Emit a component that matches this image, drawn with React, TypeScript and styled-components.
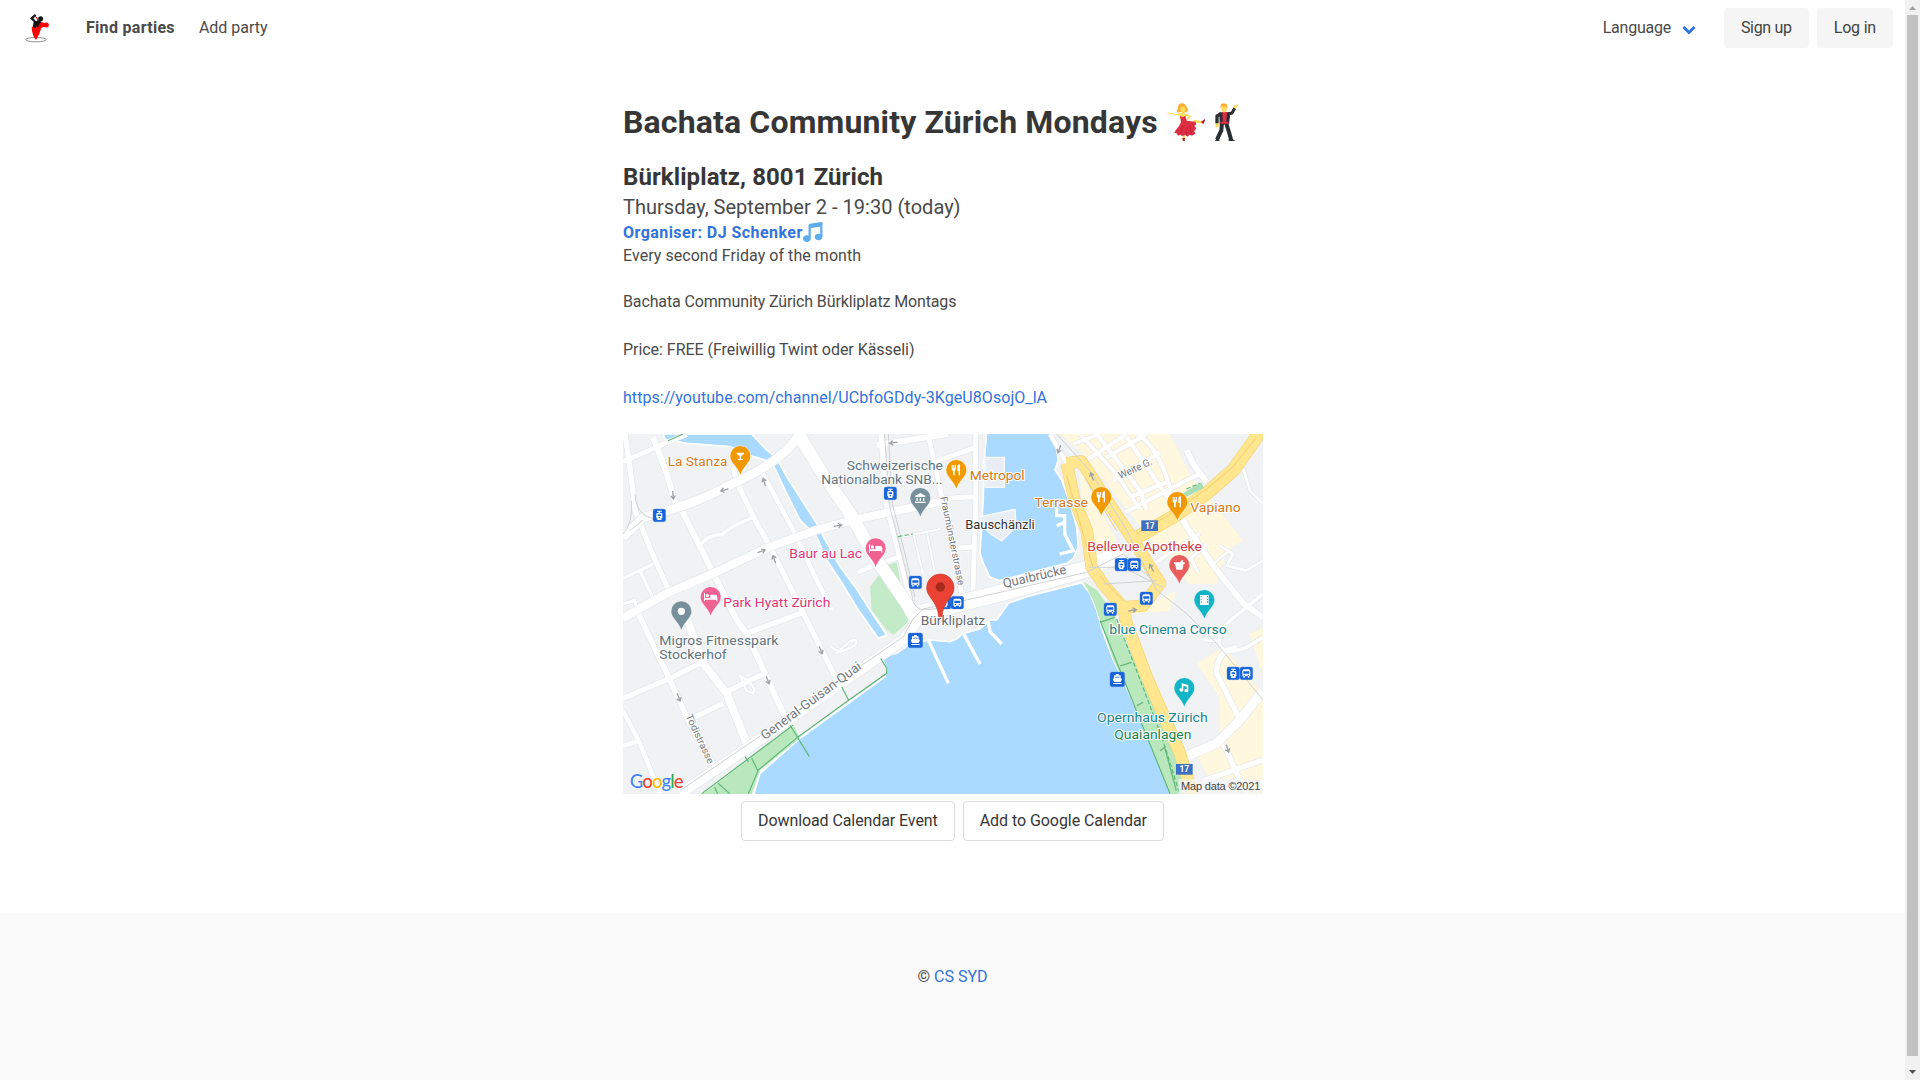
import React from "react";
import styled, { createGlobalStyle } from "styled-components";

const GlobalStyle = createGlobalStyle`
  *, *::before, *::after { box-sizing: border-box; }
  html, body { margin: 0; padding: 0; background: #fff; overflow: hidden; }
  body {
    font-family: Roboto, "Liberation Sans", sans-serif;
    font-size: 16px;
    line-height: 24px;
    color: #4a4a4a;
    text-rendering: optimizeLegibility;
  }
`;

const Screen = styled.div`
  display: grid;
  grid-template-columns: minmax(0, 1fr) 15px;
  height: 1080px;
`;

const Page = styled.div`
  display: flex;
  flex-direction: column;
  min-width: 0;
`;

const Navbar = styled.nav`
  display: flex;
  justify-content: space-between;
  align-items: center;
  height: 56px;
  padding: 0 12px 0 24px;
`;

const NavGroup = styled.div<{ $gap: number }>`
  display: flex;
  align-items: center;
  gap: ${(p) => p.$gap}px;
`;

const LogoLink = styled.a`
  display: flex;
  width: 38px;
`;

const NavLink = styled.a<{ $active?: boolean; $tracking?: number }>`
  color: #4a4a4a;
  font-weight: ${(p) => (p.$active ? 700 : 400)};
  letter-spacing: ${(p) => p.$tracking ?? 0}px;
`;

const LanguageMenu = styled.div`
  display: flex;
  align-items: center;
  gap: 11px;
  margin-right: 20px;
  svg { display: block; margin-top: 3px; }
`;

const Button = styled.a<{ $outlined?: boolean; $tracking: number }>`
  display: inline-flex;
  align-items: center;
  justify-content: center;
  height: 40px;
  padding: 0 16px;
  border: 1px solid ${(p) => (p.$outlined ? "#dbdbdb" : "transparent")};
  border-radius: 4px;
  background: ${(p) => (p.$outlined ? "#fff" : "#f5f5f5")};
  color: ${(p) => (p.$outlined ? "#363636" : "#424242")};
  letter-spacing: ${(p) => p.$tracking}px;
  white-space: nowrap;
`;

const Content = styled.main`
  width: 660px;
  height: 857px;
  margin: 0 auto;
  padding-top: 48px;
`;

const Article = styled.article`
  padding-left: 0.5px;
`;

const Title = styled.h1`
  display: flex;
  align-items: center;
  margin: 0 0 24px;
  height: 36px;
  font-size: 32px;
  line-height: 36px;
  font-weight: 700;
  letter-spacing: 0.15px;
  color: #363636;
  white-space: nowrap;
  svg { flex: none; }
`;

const TitleText = styled.span`
  margin-right: 9px;
`;

const Place = styled.h2`
  margin: 0 0 2px;
  font-size: 24px;
  line-height: 27px;
  font-weight: 700;
  letter-spacing: 0.09px;
  color: #363636;
`;

const When = styled.p`
  margin: 0 0 -1px;
  font-size: 20px;
  line-height: 29px;
  letter-spacing: 0.02px;
`;

const Organiser = styled.p`
  display: flex;
  align-items: center;
  margin: 0;
  height: 23px;
  font-weight: 700;
  letter-spacing: 0.45px;
  svg { margin-bottom: 2px; }
`;

const Link = styled.a`
  color: #3273dc;
  text-decoration: none;
`;

const Details = styled.div`
  display: flex;
  flex-direction: column;
  gap: 24px;
  margin-bottom: 24px;
`;

const Paragraph = styled.p<{ $tight?: boolean; $tracking: number }>`
  margin: 0 0 ${(p) => (p.$tight ? -2 : 0)}px;
  letter-spacing: ${(p) => p.$tracking}px;
`;

const MapFrame = styled.div`
  width: 640px;
  height: 360px;
  overflow: hidden;
  svg { display: block; }
`;

const Actions = styled.div`
  display: flex;
  justify-content: center;
  gap: 8px;
  margin-top: 7px;
`;

const Footer = styled.footer`
  flex: 1;
  padding-top: 52px;
  background: #fafafa;
  text-align: center;
`;

const ScrollTrack = styled.div`
  display: flex;
  flex-direction: column;
  align-items: center;
  background: #f1f1f1;
  svg { display: block; flex: none; }
  svg:last-child { margin-top: auto; }
`;

const ScrollThumb = styled.div`
  width: 11px;
  height: 1041px;
  background: #c1c1c1;
`;

const Logo = () => (
  <svg width="28" height="31" viewBox="72 38 84 93" aria-label="Social Dance Today">
    <ellipse cx="108" cy="118" rx="31" ry="6.500" fill="none" stroke="#444" strokeWidth="1.800" />
    <path d="M95 82L100 76L114 64L107 50L110 49L118 65L127 66L137 70V78L124 82Q120 100 108 119Q96 104 95 82Z" fill="#f00" />
    <circle cx="139" cy="74" r="7.500" fill="#f00" />
    <circle cx="122" cy="55" r="7.500" fill="#111" />
    <path d="M90 54L104 42L109 44L108 48L100 54L107 62L117 60L125 64L118 70L115 80L110 78L108 82L101 82L99 76L101 64Z" fill="#111" />
  </svg>
);

const DancerWoman = () => (
  <svg width="38" height="38" viewBox="51 38 114 114" role="img" aria-label="Woman dancing">
    <path d="M52 66L82 72Q94 65 107 70L124 77L113 90L109 87L116 79L106 77L104 85H90L87 76L52 69Z" fill="#ffdc5d" />
    <path d="M97 130L98 150H105L104 130ZM132 88L160 93V99L132 97Z" fill="#ffdc5d" />
    <path d="M84 55Q83 40 95 39Q108 40 110 51Q116 55 112 63Q107 69 101 65H91Q84 69 80 64Q80 59 84 55Z" fill="#ffac33" />
    <path d="M91 51Q99 45 106 52Q107 66 98 69Q90 67 91 51Z" fill="#ffdc5d" />
    <path d="M90 76Q97 84 106 76L110 91L136 94L139 102L133 107L139 114L133 122L136 130L126 136L119 133L112 139L106 134L96 137L91 133L84 136L80 129L73 128L77 120Q89 107 93 96Z" fill="#dd2e44" />
    <path d="M97 143H105L104 153H99ZM154 94L164 86L165 90L161 100L154 98Z" fill="#be1931" />
    <path d="M91 129L98 107M109 132L112 110M124 129L119 106" stroke="#be1931" strokeWidth="2" />
  </svg>
);

const DancerMan = () => (
  <svg width="38" height="38" viewBox="165 38 114 114" role="img" aria-label="Man dancing">
    <path d="M250 54L251 43L255 46L261 41L263 46L257 55ZM196 98H205L207 107L201 112L196 107Z" fill="#ffdc5d" />
    <g fill="none" stroke="#292f33" strokeLinejoin="round">
      <path d="M212 71L201 77L201 99" strokeWidth="10" />
      <path d="M234 71L246 68L254 54" strokeWidth="9" />
      <path d="M216 97L214 120L201 148" strokeWidth="12" />
      <path d="M228 97L236 122L243 147" strokeWidth="12" />
    </g>
    <path d="M208 66H238L240 78L237 102H209ZM194 152L202 144L210 152ZM236 152V146L247 145L256 152Z" fill="#292f33" />
    <path d="M217 65H231L229 94H236V100H211V94H218Z" fill="#dd2e44" />
    <path d="M214 46H230V60Q222 73 215 60Z" fill="#ffdc5d" />
    <path d="M212 56Q209 40 221 39Q236 39 231 57L228 49Q220 49 215 47Z" fill="#ffac33" />
  </svg>
);

const MusicNote = () => (
  <svg width="20" height="20" viewBox="0 0 36 36" role="img" aria-label="Music">
    <path fill="#5dadec" d="M34.2.1C33.9 0 33.6 0 33.3 0L12.3 3C11 3.2 10 4.400 10 5.700V24.600C9.100 24.200 8.100 24 7 24C3.100 24 0 26.700 0 30S3.100 36 7 36S14 33.300 14 30V10.900L31 8.500V21.600C30.100 21.200 29.100 21 28 21C24.100 21 21 23.700 21 27S24.100 33 28 33S35 30.300 35 27V1.500C35 .8 34.700.3 34.200.1Z" />
  </svg>
);

type Road = [string, number];

/* Map artwork uses a 1920x1080 grid, three units for each pixel. */
const minorRoads: Road[] = [
  ["M0 83L191 0", 15],
  ["M6 0L25 130L36 228L80 340L141 478", 16],
  ["M90 10L101 38L131 118L156 203L181 238L231 338L291 458L341 558L371 598L421 708L481 838L511 878", 18],
  ["M331 100L341 143L391 248L441 338L501 458L536 528L591 638L631 718L665 760", 16],
  ["M411 103L521 308L571 418L626 528", 14],
  ["M231 333Q260 300 296 303Q320 278 391 250", 11],
  ["M0 433L91 390M51 410L91 495M0 510L35 500L45 530", 10],
  ["M41 528L141 738L201 870L275 1000", 17],
  ["M180 530L201 578L241 688L311 778L371 928", 24],
  ["M0 793L141 733L241 683M371 598L541 535M311 773L425 718M206 853L301 808", 16],
  ["M0 830L51 928L111 1079M0 935L48 920", 14],
  ["M761 33L975 0M775 0L790 208L831 368L871 528", 18],
  ["M915 0L955 180L1000 400L1020 500", 14],
  ["M1058 0V200L1050 470M971 193L1051 188M1001 343L1050 338M831 120L1058 40", 15],
  ["M705 415L761 390L831 368", 14],
  ["M831 310L951 285M871 300L900 420M911 292L935 410", 6],
  ["M625 638L650 655L695 635Q710 610 680 622L640 658M351 725L375 740L395 765L390 778L370 770Z", 7],
  ["M1281 0L1331 88M1351 30L1431 0M1391 78L1511 0M1371 0L1480 120L1550 225", 12],
  ["M1421 0L1551 170L1570 225M1511 10L1641 200M1541 0Q1601 30 1641 160M1451 70L1571 0M1471 140L1611 55M1506 235L1731 118M1520 190L1641 140", 13],
  ["M1691 48L1711 90L1751 145M1631 165L1691 278L1781 408L1861 508L1920 550", 18],
  ["M1591 390L1731 298M1641 430L1751 330M1701 370L1725 415", 10],
  ["M1861 105L1881 170L1920 210M1791 335L1831 360L1811 395L1870 410L1920 380M1771 390L1820 348", 8],
  ["M1920 480L1821 560Q1780 600 1791 635Q1810 665 1870 640L1920 610M1741 618L1790 620", 11],
  ["M1841 640Q1780 650 1781 718L1851 858M1801 930L1871 1079M1741 1040L1920 978", 16],
  ["M1681 970L1781 928L1851 858L1920 770", 28],
];

const arterials: Road[] = [
  ["M531 0Q480 80 341 143Q241 198 141 228L61 250L0 310", 27],
  ["M0 552L131 478L271 418L441 338L511 313L581 288L691 258L831 228L955 203", 25],
  ["M526 0L591 108L681 238L761 378L851 508L880 560", 38],
  ["M171 1079L391 930L591 792L711 708L841 618L890 550L1000 510", 32],
  ["M880 540L960 520L1141 475L1391 405L1500 355", 50],
];

const highways: Road[] = [
  ["M1331 88L1355 200L1391 288L1406 400L1440 450L1500 520L1511 568L1571 728L1671 958L1711 1090", 34],
  ["M1331 88L1375 82L1471 228L1531 318L1611 448L1560 515L1500 520", 34],
  ["M1525 320L1651 248L1751 178L1831 108L1911 -5", 38],
];

const Roads = ({ roads, fill, edge }: { roads: Road[]; fill: string; edge: string }) => (
  <g fill="none" strokeLinejoin="round">
    {roads.map(([d, w]) => <path key={d} d={d} stroke={edge} strokeWidth={w + 3} />)}
    {roads.map(([d, w]) => <path key={d} d={d} stroke={fill} strokeWidth={w} />)}
  </g>
);

type Glyph = "cocktail" | "food" | "bed" | "bank" | "dot" | "film" | "music" | "mortar";

const glyphs: Record<Glyph, React.ReactNode> = {
  cocktail: <path d="M-11 -10H11V-7L2 1V9H8V12H-8V9H-2V1L-11 -7Z" />,
  food: <path d="M-14 -15H-11V-7H-9V-15H-6V-7H-4V-15H-1V-4Q-1 0 -5 2V16H-10V2Q-14 0 -14 -4ZM3 -13Q6 -17 11 -17V16H7V3H3Z" />,
  bed: <path d="M-20 -12H-17V3H-1V-7H14Q20 -7 20 0V13H17V8H-17V13H-20ZM-15 -4A5 5 0 1 1 -5 -4A5 5 0 1 1 -15 -4" />,
  bank: <path d="M0 -15L15 -7V-3H-15V-7ZM-12 0H-8V9H-12ZM-2 0H2V9H-2ZM8 0H12V9H8ZM-16 11H16V15H-16Z" />,
  dot: <circle r="11" />,
  film: <path fillRule="evenodd" d="M-13 -15H13V15H-13ZM-11 -12V-8H-8V-12ZM-11 -4V0H-8V-4ZM-11 4V8H-8V4ZM8 -12V-8H11V-12ZM8 -4V0H11V-4ZM8 4V8H11V4Z" />,
  music: <path d="M-7 -14L12 -9V8A6 5 0 1 1 7 3V-4L-3 -7V6A6 5 0 1 1 -8 1V-14Z" />,
  mortar: <path d="M-16 -8H2L8 -16L12 -13L9 -8H16V-3H13L9 14H-9L-13 -3H-16Z" />,
};

const Pin = ({ x, y, color, glyph }: { x: number; y: number; color: string; glyph: Glyph }) => (
  <g transform={`translate(${x} ${y})`}>
    <path d="M-31 0A31 31 0 1 1 31 0C31 20 10 29 0 57C-10 29 -31 20 -31 0Z" fill={color} stroke="#fff" strokeOpacity=".65" strokeWidth="2" />
    <g fill="#fff">{glyphs[glyph]}</g>
  </g>
);

const Stop = ({ x, y, kind }: { x: number; y: number; kind: "bus" | "tram" | "boat" }) => (
  <g transform={`translate(${x} ${y})`}>
    <rect x={kind === "boat" ? -22 : -19} y={kind === "boat" ? -22 : -19} width={kind === "boat" ? 44 : 38} height={kind === "boat" ? 44 : 38} rx="6" fill="#1765dc" stroke="#4b7bca" strokeWidth="1" />
    {kind === "bus" && <path fill="#fff" fillRule="evenodd" d="M-8 -12H8Q12 -10 12 -7V9H9V13H5V9H-5V13H-9V9H-12V-7Q-12 -10 -8 -12ZM-9 -6V1H9V-6ZM-8 4V7H-4V4ZM4 4V7H8V4Z" />}
    {kind === "tram" && <path fill="#fff" fillRule="evenodd" d="M-7 -14H7V-11H2V-7H6Q9 -7 9 -3V8L5 11L8 14H-8L-5 11L-9 8V-3Q-9 -7 -6 -7H-2V-11H-7ZM-5 -3V2H5V-3ZM-2 5V9H2V5Z" />}
    {kind === "boat" && <path fill="#fff" fillRule="evenodd" d="M-4 -16H4V-12H10V-3L14 -1L10 8H-10L-14 -1L-10 -3V-12H-4ZM-6 -8V-4L0 -6L6 -4V-8ZM-13 11H13V14H-13Z" />}
  </g>
);

const RouteShield = ({ x, y }: { x: number; y: number }) => (
  <g transform={`translate(${x} ${y})`}>
    <rect x="-25" y="-16" width="50" height="32" fill="#3d6fc4" />
    <text y="9" textAnchor="middle" fontSize="25" fontWeight="700" fill="#fff">17</text>
  </g>
);

interface LabelProps {
  x: number; y: number; w: number; color: string; size?: number; rotate?: number; children: string;
}

const Label = ({ x, y, w, color, size = 41, rotate = 0, children }: LabelProps) => (
  <text
    transform={`translate(${x} ${y}) rotate(${rotate})`}
    fontSize={size}
    textLength={w}
    lengthAdjust="spacingAndGlyphs"
    fill={color}
    stroke="#fff"
    strokeWidth="6"
    strokeLinejoin="round"
    paintOrder="stroke"
  >
    {children}
  </text>
);

const orange = "#f29900";
const pink = "#f06292";
const slate = "#78909c";
const teal = "#12b5c5";

const arrows: [number, number, number][] = [
  [150, 183, 85], [305, 168, 165], [424, 145, -105], [415, 352, -20], [644, 275, -10], [454, 376, -110],
  [812, 26, 172], [167, 790, 68], [434, 738, 68], [593, 648, 68], [1309, 45, 110], [1407, 128, -110],
  [1586, 402, -120], [1528, 529, -10], [1813, 943, 70],
];

const VenueMap = () => (
  <svg width="640" height="360" viewBox="0 0 1920 1080" fontFamily="Roboto, 'Liberation Sans', sans-serif">
    <rect width="1920" height="1080" fill="#f0f2f4" />
    <path d="M1310 0H1640L1700 120L1790 230L1860 320L1810 350L1780 450L1700 450L1570 300L1381 60Z" fill="#fff7de" />
    <path d="M1370 110L1481 318L1411 388L1385 280ZM1520 540L1660 470L1640 530Z" fill="#fff7de" />
    <path d="M1721 690L1801 638L1870 720L1920 780V1079H1880L1850 1030L1760 1040L1721 960L1790 910V790Z" fill="#fff7de" />
    <path d="M1880 600L1920 580V720Z" fill="#fff7de" />

    <g fill="#aadaff" stroke="#fff" strokeWidth="5">
      <path d="M121 0H386L426 43L461 73L491 128L581 268L601 308L651 398L696 458L741 528L791 603L766 613L706 528L651 438L611 378L581 308L531 258L491 178L446 83L391 68L321 38L191 28L126 16Z" />
      <path d="M1091 -5H1281L1301 48L1306 78L1296 108L1316 138L1341 208L1361 278L1366 338L1351 373L1331 388L1130 440L1100 428L1081 388L1071 358L1076 278L1081 188L1083 88Z" />
      <path d="M391 1085L411 1018L531 913L786 728L791 708L776 668L821 658L860 630L921 618L981 623L1000 615L1021 598L1070 585L1101 558L1121 558L1156 508L1211 488L1376 446L1401 478L1421 528L1441 598L1471 678L1491 718L1541 828L1591 948L1645 1085Z" />
    </g>
    <path d="M1086 70H1144V160H1086ZM1061 250L1176 226L1179 278L1136 321L1100 298Z" fill="#e8eef3" stroke="#f7fafc" strokeWidth="4" />
    <path d="M791 393L821 385L831 438L856 560L851 568L811 603L791 588L746 528L741 458Z" fill="#c3ebc7" />
    <path d="M511 873L531 913L411 1008L386 1080H240L391 965ZM1381 443L1421 468L1471 538L1511 628L1591 798L1671 968L1680 1080H1641L1541 828L1471 678L1441 588L1411 500Z" fill="#b9e8bd" />

    <Roads roads={minorRoads} fill="#fff" edge="#dfe2e6" />
    <Roads roads={arterials} fill="#fff" edge="#dde1e5" />
    <Roads roads={highways} fill="#ffe68f" edge="#f3cf70" />
    <path d="M1675 180L1735 145L1742 162L1690 188Z" fill="#a8dfb6" />
    <path d="M1331 125L1366 250L1410 400M1385 130L1481 290M1540 300L1651 235L1751 165L1831 98L1900 10M1500 500L1430 425" fill="none" stroke="#f3cf70" strokeWidth="3" />

    <g fill="none" stroke="#cfd2d5" strokeWidth="3">
      <path d="M171 1070L391 920L591 782L711 698L841 608L870 555L900 525L1000 505L1391 415L1500 360" />
      <path d="M785 0L798 208L838 368L868 490Q870 520 900 528L960 522M796 0L808 208L846 360L876 490M61 258L20 290M36 180Q40 260 120 255M25 200Q30 270 0 300" />
      <path d="M1301 0L1400 110L1511 288L1541 350L1601 468L1691 539L1781 628L1920 798M1400 400L1500 400L1620 460M1440 450L1601 440M1501 360L1591 440" />
    </g>
    <path d="M916 618L976 748M1021 598L1071 690M1096 563L1101 593L1136 630M1301 200V245L1325 245V300L1351 350L1310 360M1301 275L1325 265" fill="none" stroke="#fff" strokeWidth="10" />

    <g fill="none" stroke="#60b578" strokeWidth="3.500">
      <path d="M236 1079L371 978L511 873M526 908L406 1008L376 1079M366 968L376 983M386 973L406 1013M501 873L559 968M526 908L678 798L791 718V703L773 673M656 758L678 800M286 1048L320 1079M275 1060L284 1079M135 20L180 0" />
      <path d="M1431 560L1641 1079M1431 565L1475 550M1491 696L1525 685M1541 815L1560 805M1611 950L1625 940L1660 1070" />
      <path d="M1481 555L1560 760L1620 920L1670 1079M825 308L870 300M1690 165L1730 148" strokeDasharray="13 7" />
    </g>

    {arrows.map(([x, y, r]) => (
      <path key={`${x}-${y}`} transform={`translate(${x} ${y}) rotate(${r})`} d="M-12 0H10M2 -7L12 0L2 7" fill="none" stroke="#9da1a6" strokeWidth="4" />
    ))}

    <Stop x={109} y={244} kind="tram" />
    <Stop x={802} y={178} kind="tram" />
    <Stop x={877} y={445} kind="bus" />
    <Stop x={965} y={506} kind="tram" />
    <Stop x={1003} y={506} kind="bus" />
    <Stop x={1495} y={392} kind="tram" />
    <Stop x={1534} y={392} kind="bus" />
    <Stop x={1570} y={493} kind="bus" />
    <Stop x={1462} y={526} kind="bus" />
    <Stop x={1831} y={718} kind="tram" />
    <Stop x={1870} y={718} kind="bus" />
    <Stop x={877} y={619} kind="boat" />
    <Stop x={1483} y={736} kind="boat" />
    <RouteShield x={1580} y={275} />
    <RouteShield x={1684} y={1006} />

    <Label x={134} y={96} w={179} color="#d5791b">La Stanza</Label>
    <Label x={671} y={108} w={289} color="#607380">Schweizerische</Label>
    <Label x={595} y={150} w={364} color="#607380">Nationalbank SNB...</Label>
    <Label x={499} y={372} w={218} color="#dd387b">Baur au Lac</Label>
    <Label x={301} y={519} w={321} color="#dd387b">Park Hyatt Zürich</Label>
    <Label x={109} y={633} w={357} color="#607380">Migros Fitnesspark</Label>
    <Label x={109} y={675} w={202} color="#607380">Stockerhof</Label>
    <Label x={1040} y={138} w={165} color="#d5791b">Metropol</Label>
    <Label x={1027} y={285} w={208} color="#333" size={39}>Bauschänzli</Label>
    <Label x={1234} y={219} w={161} color="#d5791b">Terrasse</Label>
    <Label x={1702} y={234} w={151} color="#d5791b">Vapiano</Label>
    <Label x={1393} y={351} w={344} color="#cf3d43">Bellevue Apotheke</Label>
    <Label x={893} y={572} w={193} color="#666b70">Bürkliplatz</Label>
    <Label x={1459} y={600} w={352} color="#167f8a">blue Cinema Corso</Label>
    <Label x={1422} y={864} w={332} color="#167f8a">Opernhaus Zürich</Label>
    <Label x={1474} y={915} w={231} color="#23834c" size={40}>Quaianlagen</Label>
    <Label x={1143} y={462} w={194} color="#74787d" size={39} rotate={-13}>Quaibrücke</Label>
    <Label x={425} y={919} w={365} color="#74787d" size={39} rotate={-36.5}>General-Guisan-Quai</Label>
    <Label x={188} y={846} w={160} color="#74787d" size={29} rotate={65}>Tödistrasse</Label>
    <Label x={952} y={190} w={271} color="#74787d" size={29} rotate={78.500}>Fraumünsterstrasse</Label>
    <Label x={1492} y={135} w={108} color="#74787d" size={30} rotate={-25}>Weite G.</Label>

    <Pin x={352} y={66} color={orange} glyph="cocktail" />
    <Pin x={1000} y={108} color={orange} glyph="food" />
    <Pin x={1435} y={189} color={orange} glyph="food" />
    <Pin x={1663} y={204} color={orange} glyph="food" />
    <Pin x={892} y={192} color={slate} glyph="bank" />
    <Pin x={175} y={532} color={slate} glyph="dot" />
    <Pin x={758} y={343} color={pink} glyph="bed" />
    <Pin x={263} y={489} color={pink} glyph="bed" />
    <Pin x={1669} y={393} color="#e85d5b" glyph="mortar" />
    <Pin x={1744} y={498} color={teal} glyph="film" />
    <Pin x={1684} y={762} color={teal} glyph="music" />

    <path d="M911 461A41 41 0 1 1 993 461C993 490 960 501 957 548H947C944 501 911 490 911 461Z" fill="#ea4335" stroke="#c5372c" strokeWidth="2" />
    <circle cx="952" cy="459" r="14" fill="#a52a1c" />

    <text x="20" y="1063" fontFamily="Lato, sans-serif" fontSize="56" fontWeight="500" textLength="162" stroke="#fff" strokeWidth="4" paintOrder="stroke">
      <tspan fill="#4285f4">G</tspan><tspan fill="#ea4335">o</tspan><tspan fill="#fbbc05">o</tspan><tspan fill="#4285f4">g</tspan><tspan fill="#34a853">l</tspan><tspan fill="#ea4335">e</tspan>
    </text>
    <rect x="1667" y="1036" width="253" height="44" fill="#f5f5f5" fillOpacity=".78" />
    <text x="1674" y="1067" fontFamily="'Liberation Sans', sans-serif" fontSize="33" textLength="238" fill="#444">Map data ©2021</text>
  </svg>
);

export default function App() {
  return (
    <>
      <GlobalStyle />
      <Screen>
        <Page>
          <Navbar>
            <NavGroup $gap={24}>
              <LogoLink><Logo /></LogoLink>
              <NavLink $active $tracking={0.3}>Find parties</NavLink>
              <NavLink>Add party</NavLink>
            </NavGroup>
            <NavGroup $gap={8}>
              <LanguageMenu>
                <NavLink $tracking={-0.25}>Language</NavLink>
                <svg width="14" height="10" viewBox="0 0 14 10">
                  <path d="M1.500 2L7 7.500L12.500 2" fill="none" stroke="#3273dc" strokeWidth="3" />
                </svg>
              </LanguageMenu>
              <Button $tracking={-0.3}>Sign up</Button>
              <Button $tracking={-0.2}>Log in</Button>
            </NavGroup>
          </Navbar>
          <Content>
            <Article>
              <Title>
                <TitleText>Bachata Community Zürich Mondays</TitleText>
                <DancerWoman />
                <DancerMan />
              </Title>
              <Place>Bürkliplatz, 8001 Zürich</Place>
              <When>Thursday, September 2 - 19:30 (today)</When>
              <Organiser>
                <Link>Organiser: DJ Schenker</Link>
                <MusicNote />
              </Organiser>
              <Details>
                <Paragraph $tight $tracking={0.05}>Every second Friday of the month</Paragraph>
                <Paragraph $tracking={-0.13}>Bachata Community Zürich Bürkliplatz Montags</Paragraph>
                <Paragraph $tracking={-0.04}>Price: FREE (Freiwillig Twint oder Kässeli)</Paragraph>
                <Paragraph $tracking={0.06}><Link>https://youtube.com/channel/UCbfoGDdy-3KgeU8OsojO_lA</Link></Paragraph>
              </Details>
              <MapFrame><VenueMap /></MapFrame>
            </Article>
            <Actions>
              <Button $outlined $tracking={-0.09}>Download Calendar Event</Button>
              <Button $outlined $tracking={-0.06}>Add to Google Calendar</Button>
            </Actions>
          </Content>
          <Footer>© <Link>CS SYD</Link></Footer>
        </Page>
        <ScrollTrack>
          <svg width="15" height="15"><path d="M4 10L7.500 6L11 10Z" fill="#a3a3a3" /></svg>
          <ScrollThumb />
          <svg width="15" height="15"><path d="M4 5L7.500 9L11 5Z" fill="#505050" /></svg>
        </ScrollTrack>
      </Screen>
    </>
  );
}
